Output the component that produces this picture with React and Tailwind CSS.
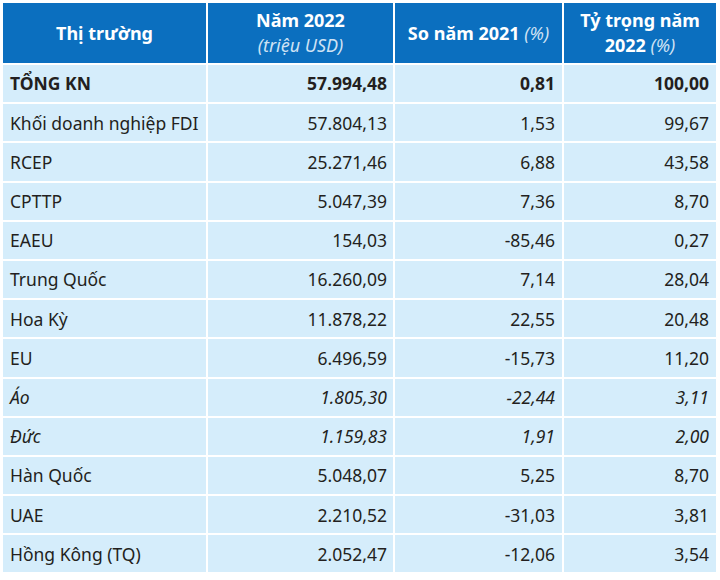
const rows = [
    { name: 'TỔNG KN', v: '57.994,48', so: '0,81', ty: '100,00', bold: true },
    { name: 'Khối doanh nghiệp FDI', v: '57.804,13', so: '1,53', ty: '99,67' },
    { name: 'RCEP', v: '25.271,46', so: '6,88', ty: '43,58' },
    { name: 'CPTTP', v: '5.047,39', so: '7,36', ty: '8,70' },
    { name: 'EAEU', v: '154,03', so: '-85,46', ty: '0,27' },
    { name: 'Trung Quốc', v: '16.260,09', so: '7,14', ty: '28,04' },
    { name: 'Hoa Kỳ', v: '11.878,22', so: '22,55', ty: '20,48' },
    { name: 'EU', v: '6.496,59', so: '-15,73', ty: '11,20' },
    { name: 'Áo', v: '1.805,30', so: '-22,44', ty: '3,11', italic: true },
    { name: 'Đức', v: '1.159,83', so: '1,91', ty: '2,00', italic: true },
    { name: 'Hàn Quốc', v: '5.048,07', so: '5,25', ty: '8,70' },
    { name: 'UAE', v: '2.210,52', so: '-31,03', ty: '3,81' },
    { name: 'Hồng Kông (TQ)', v: '2.052,47', so: '-12,06', ty: '3,54' },
]

const App = () => {
    return (
        <div className="w-[720px] h-[580px] bg-white p-[3px] font-['Noto_Sans',sans-serif] text-[#231f20]">
            <div className="grid grid-cols-[203px_185px_167px_152px] gap-[2px] bg-white">
                {/* header */}
                <div className="h-[60px] bg-[#0b6fbf] text-white font-bold text-[18px] flex items-center justify-center">Thị trường</div>
                <div className="h-[60px] bg-[#0b6fbf] text-white text-[18px] flex flex-col items-center justify-center leading-[25px]">
                    <span className="font-bold">Năm 2022</span>
                    <span className="italic text-[#cfe2f4]">(triệu USD)</span>
                </div>
                <div className="h-[60px] bg-[#0b6fbf] text-white text-[18px] flex items-center justify-center">
                    <span className="font-bold">So năm 2021&nbsp;</span>
                    <span className="italic text-[#cfe2f4]">(%)</span>
                </div>
                <div className="h-[60px] bg-[#0b6fbf] text-white text-[18px] flex flex-col items-center justify-center leading-[25px]">
                    <span className="font-bold">Tỷ trọng năm</span>
                    <span><span className="font-bold">2022 </span><span className="italic text-[#cfe2f4]">(%)</span></span>
                </div>

                {rows.map((r) => {
                    const cls = 'h-[37.2px] bg-[#d5edfb] text-[17.5px] flex items-center ' + (r.bold ? 'font-bold ' : '') + (r.italic ? 'italic ' : '')
                    return [
                        <div key={r.name + 'a'} className={cls + 'pl-[7px]'}>{r.name}</div>,
                        <div key={r.name + 'b'} className={cls + 'justify-end pr-[6px]'}>{r.v}</div>,
                        <div key={r.name + 'c'} className={cls + 'justify-end pr-[7px]'}>{r.so}</div>,
                        <div key={r.name + 'd'} className={cls + 'justify-end pr-[7px]'}>{r.ty}</div>,
                    ]
                })}
            </div>
        </div>
    );
};

export default App;
